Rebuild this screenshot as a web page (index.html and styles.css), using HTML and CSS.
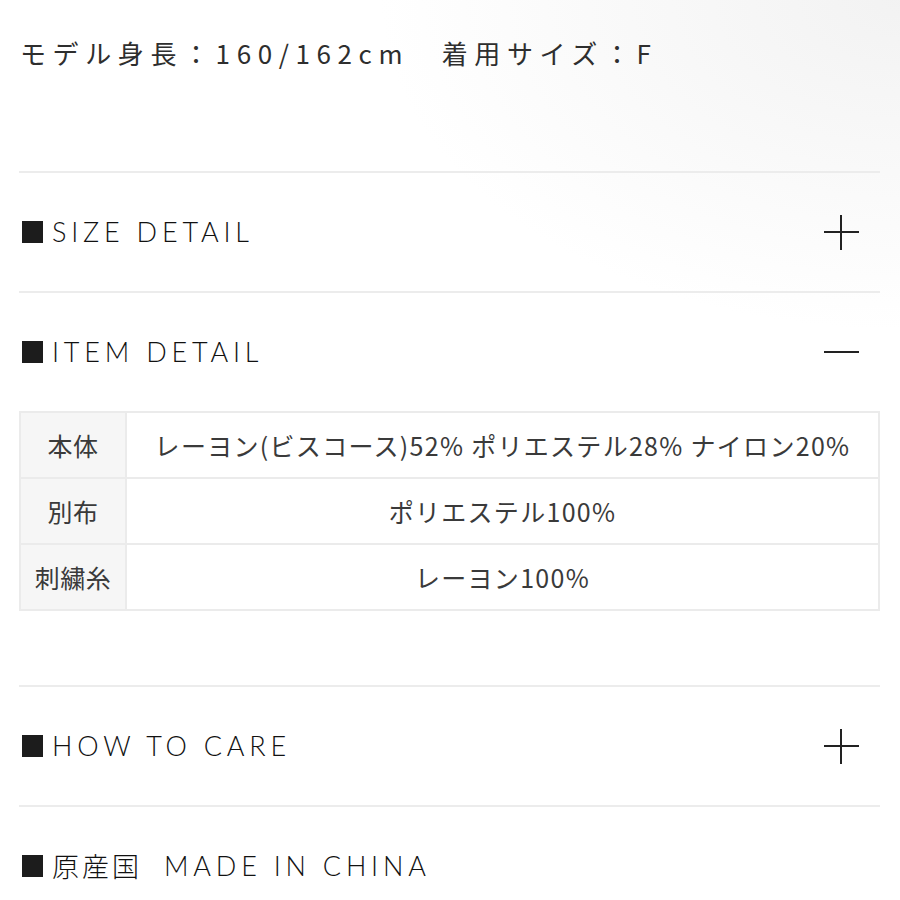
FILE: index.html
```html
<!DOCTYPE html>
<html lang="ja">
<head>
<meta charset="utf-8">
<link rel="stylesheet" href="styles.css">
</head>
<body>
<div class="page">
  <p class="model">モデル身長：160/162cm　着用サイズ：F</p>

  <section class="acc">
    <div class="acc-head">
      <h2 class="acc-title">SIZE DETAIL</h2>
      <span class="icon plus"></span>
    </div>
  </section>

  <section class="acc open">
    <div class="acc-head">
      <h2 class="acc-title">ITEM DETAIL</h2>
      <span class="icon minus"></span>
    </div>
    <table class="spec">
      <tr><th>本体</th><td>レーヨン(ビスコース)52% ポリエステル28% ナイロン20%</td></tr>
      <tr><th>別布</th><td>ポリエステル100%</td></tr>
      <tr><th>刺繍糸</th><td>レーヨン100%</td></tr>
    </table>
  </section>

  <section class="acc">
    <div class="acc-head">
      <h2 class="acc-title">HOW TO CARE</h2>
      <span class="icon plus"></span>
    </div>
  </section>

  <section class="acc last">
    <div class="acc-head">
      <h2 class="acc-title"><span class="jp">原産国</span> MADE IN CHINA</h2>
    </div>
  </section>
</div>
</body>
</html>
```

FILE: styles.css
```css
html, body {
  margin: 0;
  padding: 0;
}
body {
  background:
    radial-gradient(ellipse 520px 330px at 900px 0px, rgba(230,230,230,0.5), rgba(255,255,255,0) 100%),
    #ffffff;
  min-height: 900px;
  font-family: "Noto Sans CJK JP", "Noto Sans", sans-serif;
  color: #333;
}
.page {
  padding: 0 20px 0 19px;
}
.model {
  margin: 0;
  padding-top: 34px;
  height: 171px;
  box-sizing: border-box;
  font-family: "Noto Sans CJK JP", sans-serif;
  font-size: 26px;
  line-height: 38px;
  letter-spacing: 6.6px;
  color: #2e2e2e;
  padding-left: 1px;
}
.acc {
  border-top: 2px solid #ececec;
}
.acc-head {
  height: 118px;
  display: flex;
  align-items: center;
  justify-content: space-between;
}
.acc-title {
  margin: 0;
  display: flex;
  align-items: center;
  font-family: "Lato", "Noto Sans CJK JP", sans-serif;
  font-weight: 300;
  font-size: 27px;
  letter-spacing: 4.8px;
  color: #111;
  line-height: 30px;
}
.acc-title::before {
  content: "";
  width: 21px;
  height: 22px;
  background: #1c1c1c;
  margin-left: 3px;
  margin-right: 9px;
  flex: none;
}
.jp {
  font-family: "Noto Sans CJK JP", sans-serif;
  font-weight: 300;
  letter-spacing: 3px;
  margin-right: 22px;
}
.icon {
  position: relative;
  width: 35px;
  height: 35px;
  margin-right: 21px;
}
.icon::before,
.icon::after {
  content: "";
  position: absolute;
  background: #222;
}
.icon::before {
  left: 0;
  right: 0;
  top: 16px;
  height: 2px;
}
.plus::after {
  top: 0;
  bottom: 0;
  left: 16px;
  width: 2px;
}
.minus::after {
  display: none;
}
.spec {
  width: 100%;
  border-collapse: collapse;
  margin-bottom: 74px;
  font-family: "Noto Sans CJK JP", sans-serif;
  font-size: 25px;
  color: #3a3a3a;
}
.spec th,
.spec td {
  border: 2px solid #ebebeb;
  height: 64px;
  padding: 0;
  text-align: center;
  font-weight: 400;
}
.spec th {
  width: 104px;
  background: #f6f6f6;
  letter-spacing: 0.5px;
}
.spec td {
  letter-spacing: 1.3px;
}
```
